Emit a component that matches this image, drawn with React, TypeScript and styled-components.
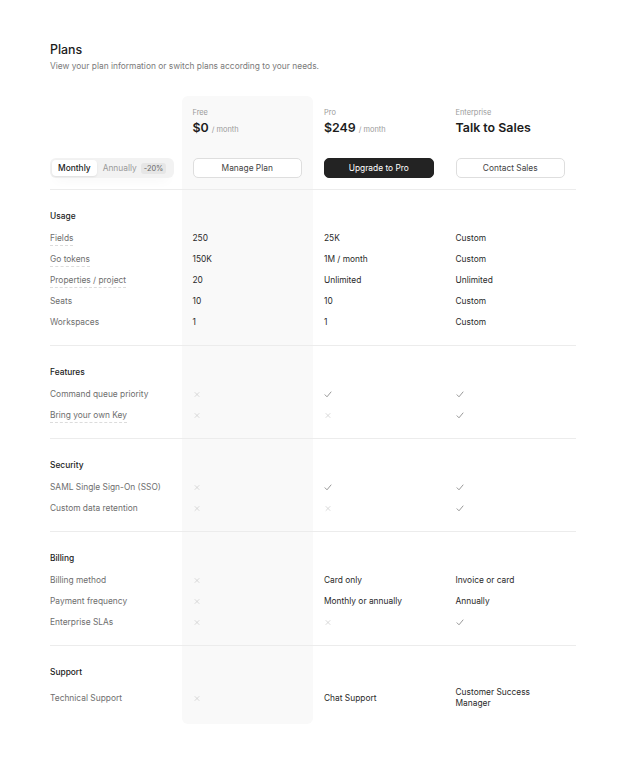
import React from "react";
import styled, { createGlobalStyle } from "styled-components";

const GlobalStyle = createGlobalStyle`
  html, body { margin: 0; padding: 0; background: #ffffff; }
  body { font-family: Inter, "Noto Sans", sans-serif; color: #222; -webkit-font-smoothing: antialiased; }
  * { box-sizing: border-box; }
`;

const Page = styled.div`
  padding: 42px 44px 40px 50px;
`;

const Title = styled.h1`
  margin: 0;
  font-size: 12.4px;
  line-height: 16px;
  font-weight: 500;
  color: #1c1c1c;
`;

const Subtitle = styled.p`
  margin: 2px 0 0;
  font-size: 8.4px;
  line-height: 12px;
  color: #7a7a7a;
`;

const Table = styled.div`
  position: relative;
  margin-top: 24px;
  isolation: isolate;
  &::before {
    content: "";
    position: absolute;
    z-index: -1;
    top: 0;
    bottom: 0;
    left: 25%;
    width: 25%;
    background: #f9f9f9;
    border-radius: 6px;
  }
`;

const Grid = styled.div`
  display: grid;
  grid-template-columns: repeat(4, minmax(0, 1fr));
`;

const Header = styled(Grid)`
  padding: 12px 0 11px;
  row-gap: 22px;
`;

const PlanHead = styled.div`
  padding: 0 11px;
  display: flex;
  flex-direction: column;
  gap: 2px;
`;

const PlanName = styled.div`
  font-size: 7.4px;
  line-height: 10px;
  height: 10px;
  color: #9a9a9a;
`;

const Price = styled.div`
  display: flex;
  align-items: baseline;
  gap: 3px;
  height: 16px;
  font-size: 12.4px;
  line-height: 16px;
  font-weight: 600;
  color: #1c1c1c;
`;

const Per = styled.span`
  font-size: 7.4px;
  line-height: 10px;
  font-weight: 400;
  color: #9a9a9a;
`;

const ActionCell = styled.div<{ $pad?: boolean }>`
  padding: ${(p) => (p.$pad ? "0 11px" : "0 8px 0 0")};
  display: flex;
  align-items: center;
  height: 20px;
`;

const Button = styled.button<{ $dark?: boolean }>`
  width: 100%;
  height: 20px;
  border-radius: 5px;
  font-family: inherit;
  font-size: 8.4px;
  line-height: 1;
  cursor: pointer;
  border: 1px solid ${(p) => (p.$dark ? "#222" : "#dedede")};
  background: ${(p) => (p.$dark ? "#232323" : "#ffffff")};
  color: ${(p) => (p.$dark ? "#ffffff" : "#444")};
`;

const Toggle = styled.div`
  display: flex;
  align-items: center;
  width: 100%;
  height: 20px;
  padding: 2px;
  background: #f2f2f2;
  border-radius: 6px;
  box-shadow: 0 8px 12px -6px rgba(0, 0, 0, 0.04);
`;

const Seg = styled.div<{ $active?: boolean }>`
  height: 16px;
  display: flex;
  align-items: center;
  gap: 4px;
  padding: 0 6px;
  border-radius: 4px;
  font-size: 8.4px;
  font-weight: ${(p) => (p.$active ? 500 : 400)};
  color: ${(p) => (p.$active ? "#1c1c1c" : "#9a9a9a")};
  background: ${(p) => (p.$active ? "#ffffff" : "transparent")};
  box-shadow: ${(p) => (p.$active ? "0 1px 2px rgba(0,0,0,0.08)" : "none")};
`;

const Badge = styled.span`
  font-size: 7.4px;
  color: #666;
  background: #e6e6e6;
  padding: 1px 3px;
  border-radius: 3px;
`;

const Section = styled(Grid)<{ $last?: boolean }>`
  border-top: 1px solid #ececec;
  padding: 14px 0 ${(p) => (p.$last ? "13px" : "13px")};
`;

const SectionTitle = styled.div`
  grid-column: 1 / -1;
  height: 23px;
  padding-top: 1px;
  display: flex;
  align-items: center;
  font-size: 8.4px;
  font-weight: 500;
  color: #222;
`;

const Cell = styled.div<{ $label?: boolean }>`
  min-height: 21px;
  display: flex;
  align-items: center;
  padding: 4px ${(p) => (p.$label ? "0" : "11px")} 2px;
  font-size: 8.4px;
  line-height: 11px;
  color: ${(p) => (p.$label ? "#6e6e6e" : "#2a2a2a")};
`;

const Label = styled.span<{ $dashed?: boolean }>`
  border-bottom: 1px dashed ${(p) => (p.$dashed ? "#dcdcdc" : "transparent")};
  padding-bottom: 1px;
  margin-bottom: -2px;
`;

const Check = () => (
  <svg width="8" height="7" viewBox="0 0 8 7" fill="none">
    <path d="M1 3.8 L3 5.8 L7 1" stroke="#8c8c8c" strokeWidth="0.9" strokeLinecap="round" strokeLinejoin="round" />
  </svg>
);

const Cross = () => (
  <svg width="8" height="7" viewBox="0 0 8 7" fill="none">
    <path d="M2 1.5 L6 5.5 M6 1.5 L2 5.5" stroke="#cfcfcf" strokeWidth="0.8" strokeLinecap="round" />
  </svg>
);

type V = string | boolean;
type Row = { label: string; dashed?: boolean; values: [V, V, V] };
type Sec = { title: string; rows: Row[] };

const sections: Sec[] = [
  {
    title: "Usage",
    rows: [
      { label: "Fields", dashed: true, values: ["250", "25K", "Custom"] },
      { label: "Go tokens", dashed: true, values: ["150K", "1M / month", "Custom"] },
      { label: "Properties / project", dashed: true, values: ["20", "Unlimited", "Unlimited"] },
      { label: "Seats", values: ["10", "10", "Custom"] },
      { label: "Workspaces", values: ["1", "1", "Custom"] },
    ],
  },
  {
    title: "Features",
    rows: [
      { label: "Command queue priority", values: [false, true, true] },
      { label: "Bring your own Key", dashed: true, values: [false, false, true] },
    ],
  },
  {
    title: "Security",
    rows: [
      { label: "SAML Single Sign-On (SSO)", values: [false, true, true] },
      { label: "Custom data retention", values: [false, false, true] },
    ],
  },
  {
    title: "Billing",
    rows: [
      { label: "Billing method", values: [false, "Card only", "Invoice or card"] },
      { label: "Payment frequency", values: [false, "Monthly or annually", "Annually"] },
      { label: "Enterprise SLAs", values: [false, false, true] },
    ],
  },
  {
    title: "Support",
    rows: [
      { label: "Technical Support", values: [false, "Chat Support", "Customer Success Manager"] },
    ],
  },
];

const renderValue = (v: V) => (v === true ? <Check /> : v === false ? <Cross /> : v);

export default function App() {
  return (
    <>
      <GlobalStyle />
      <Page>
        <Title>Plans</Title>
        <Subtitle>View your plan information or switch plans according to your needs.</Subtitle>
        <Table>
          <Header>
            <div />
            <PlanHead>
              <PlanName>Free</PlanName>
              <Price>
                $0 <Per>/ month</Per>
              </Price>
            </PlanHead>
            <PlanHead>
              <PlanName>Pro</PlanName>
              <Price>
                $249 <Per>/ month</Per>
              </Price>
            </PlanHead>
            <PlanHead>
              <PlanName>Enterprise</PlanName>
              <Price>Talk to Sales</Price>
            </PlanHead>
            <ActionCell>
              <Toggle>
                <Seg $active>Monthly</Seg>
                <Seg>
                  Annually <Badge>-20%</Badge>
                </Seg>
              </Toggle>
            </ActionCell>
            <ActionCell $pad>
              <Button>Manage Plan</Button>
            </ActionCell>
            <ActionCell $pad>
              <Button $dark>Upgrade to Pro</Button>
            </ActionCell>
            <ActionCell $pad>
              <Button>Contact Sales</Button>
            </ActionCell>
          </Header>
          {sections.map((s, i) => (
            <Section key={s.title} $last={i === sections.length - 1}>
              <SectionTitle>{s.title}</SectionTitle>
              {s.rows.map((r) => (
                <React.Fragment key={r.label}>
                  <Cell $label>
                    <Label $dashed={r.dashed}>{r.label}</Label>
                  </Cell>
                  {r.values.map((v, j) => (
                    <Cell key={j}>{renderValue(v)}</Cell>
                  ))}
                </React.Fragment>
              ))}
            </Section>
          ))}
        </Table>
      </Page>
    </>
  );
}
